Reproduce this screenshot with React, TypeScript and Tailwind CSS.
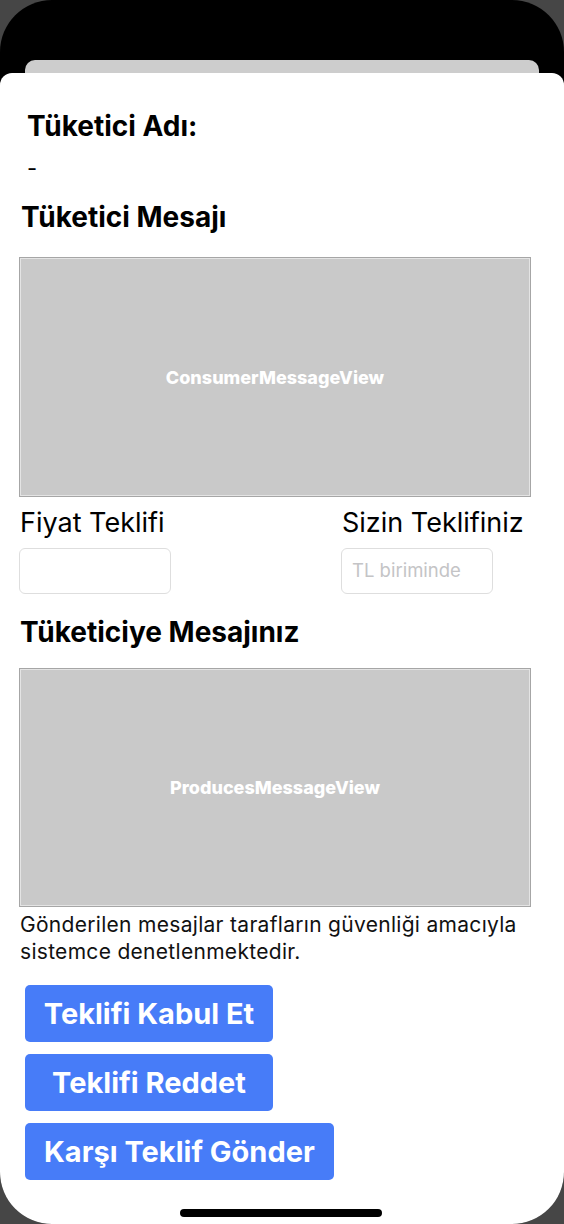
export default function App() {
  return (
    <div className="w-[564px] h-[1224px] bg-[#464646] font-['Inter',sans-serif] text-black">
      <div className="relative h-full rounded-[52px] bg-black overflow-hidden flex flex-col">
        {/* card behind the sheet */}
        <div className="shrink-0 mx-[25px] mt-[60px] h-[13px] rounded-t-[10px] bg-[#cdcdcd]" />

        {/* sheet */}
        <div className="flex-1 bg-white rounded-t-[12px] px-[19px] flex flex-col">
          <h1 className="mt-[37px] ml-[8px] text-[28px] leading-[32px] font-bold">Tüketici Adı:</h1>
          <p className="mt-[13px] ml-[8px] text-[22px] leading-[26px]">-</p>

          <h2 className="mt-[20px] ml-[2px] text-[28px] leading-[32px] font-bold">Tüketici Mesajı</h2>
          <div className="mt-[24px] h-[240px] w-[512px] bg-[#c9c9c9] border border-[#a6a6a6] shadow-[inset_0_0_0_1px_#e4e4e4] flex items-center justify-center">
            <span className="text-white font-extrabold text-[18px]">ConsumerMessageView</span>
          </div>

          <div className="mt-[9px] flex justify-between pr-[19px]">
            <div className="flex flex-col">
              <span className="ml-[1px] text-[27px] leading-[34px]">Fiyat Teklifi</span>
              <div className="mt-[8px] w-[152px] h-[46px] rounded-[6px] border border-[#dedede]" />
            </div>
            <div className="flex flex-col w-[185px]">
              <span className="ml-[1px] text-[27px] leading-[34px] whitespace-nowrap">Sizin Teklifiniz</span>
              <div className="mt-[8px] w-[152px] h-[46px] rounded-[6px] border border-[#dedede] flex items-center px-[10px]">
                <span className="text-[#c4c4c6] text-[18.5px]">TL biriminde</span>
              </div>
            </div>
          </div>

          <h2 className="mt-[22px] ml-[1px] text-[28px] leading-[32px] font-bold">Tüketiciye Mesajınız</h2>
          <div className="mt-[20px] h-[239px] w-[512px] bg-[#c9c9c9] border border-[#a6a6a6] shadow-[inset_0_0_0_1px_#e4e4e4] flex items-center justify-center">
            <span className="text-white font-extrabold text-[18px]">ProducesMessageView</span>
          </div>

          <p className="mt-[4px] ml-[1px] text-[21px] leading-[27px] tracking-[0.3px] text-[#111]">
            Gönderilen mesajlar tarafların güvenliği amacıyla sistemce denetlenmektedir.
          </p>

          <div className="mt-[20px] ml-[6px] flex flex-col items-start gap-[12px]">
            <button className="w-[248px] h-[57px] rounded-[5px] bg-[#477cf8] text-white font-bold text-[29px]">
              Teklifi Kabul Et
            </button>
            <button className="w-[248px] h-[57px] rounded-[5px] bg-[#477cf8] text-white font-bold text-[29px]">
              Teklifi Reddet
            </button>
            <button className="h-[57px] px-[19px] rounded-[5px] bg-[#477cf8] text-white font-bold text-[29px]">
              Karşı Teklif Gönder
            </button>
          </div>
        </div>

        {/* home indicator */}
        <div className="absolute bottom-[7px] left-[180px] w-[202px] h-[8px] rounded-full bg-black" />
      </div>
    </div>
  );
}
